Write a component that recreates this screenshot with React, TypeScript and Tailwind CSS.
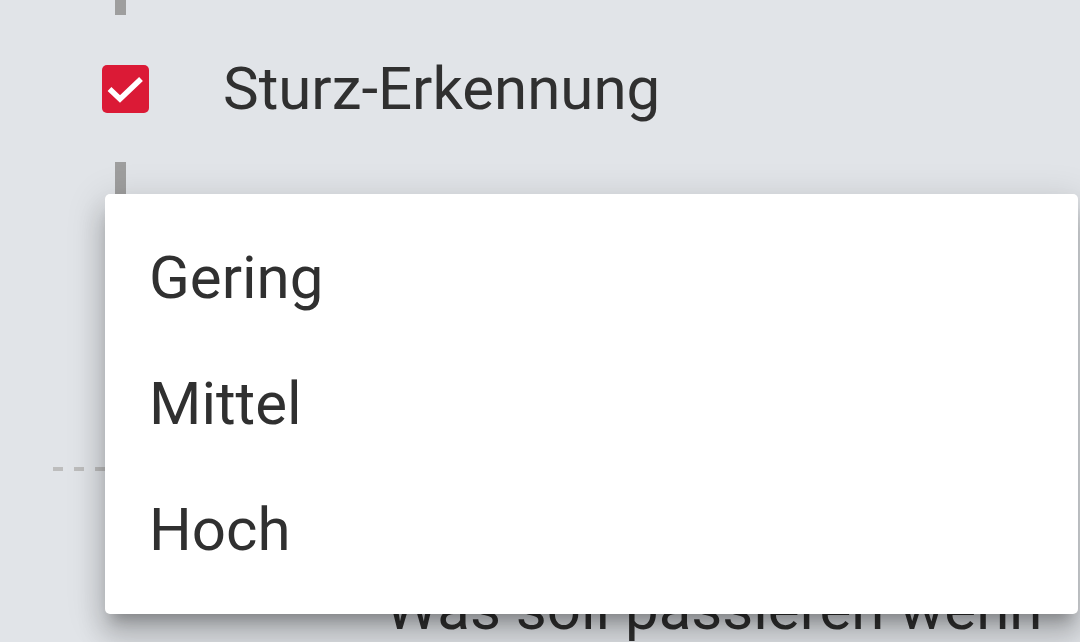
const Bar = ({ className }: { className: string }) => (
  <div className={`ml-[115px] w-[11px] bg-[#9e9e9e] ${className}`} />
);

const options = ["Gering", "Mittel", "Hoch"];

export default function App() {
  return (
    <div className="relative h-[642px] w-[1080px] overflow-hidden bg-[#e1e4e8] font-['Roboto',sans-serif] text-[#303030]">
      {/* settings list behind the menu */}
      <Bar className="h-[15px]" />

      <div className="mt-[50px] flex h-[48px] items-center">
        <div className="ml-[102px] flex h-[48px] w-[47px] shrink-0 items-center justify-center rounded-[5px] bg-[#db1a36]">
          <svg width="47" height="48" viewBox="0 0 47 48" fill="none">
            <polyline
              points="7.5,24 18,34 39,14"
              stroke="white"
              strokeWidth="5.5"
              strokeLinecap="butt"
              strokeLinejoin="miter"
            />
          </svg>
        </div>
        <span className="ml-[74px] text-[60px] leading-none">Sturz-Erkennung</span>
      </div>

      <Bar className="mt-[49px] h-[60px]" />

      <div className="ml-[53px] mt-[245px] h-[4px] w-[400px] bg-[repeating-linear-gradient(90deg,#bdbdbd_0_10px,transparent_10px_21px)]" />

      <div className="ml-[385px] mt-[108px] text-[60px] leading-none whitespace-nowrap">
        Was soll passieren wenn
      </div>

      {/* open dropdown */}
      <div className="absolute left-[105px] top-[194px] w-[973px] rounded-[5px] bg-white py-[21px] shadow-[0_21px_26px_3px_rgba(0,0,0,0.16),0_8px_37px_5px_rgba(0,0,0,0.12),0_13px_13px_-8px_rgba(0,0,0,0.24)]">
        {options.map((o) => (
          <div key={o} className="h-[126px] pl-[44px] text-[60px] leading-[126px]">
            {o}
          </div>
        ))}
      </div>
    </div>
  );
}
